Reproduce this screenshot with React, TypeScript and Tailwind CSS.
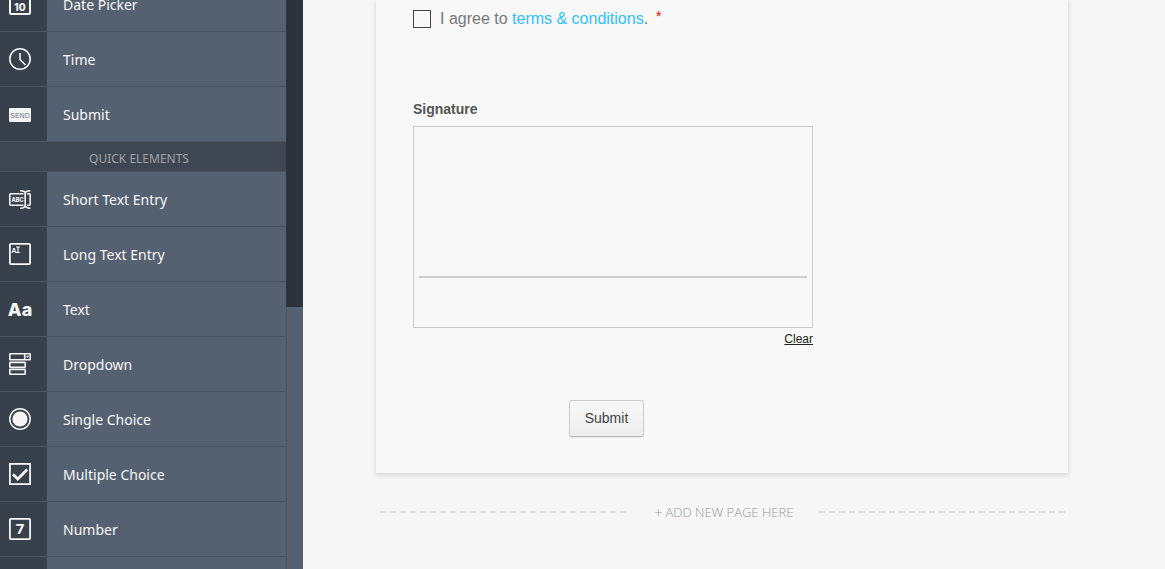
import type { ReactNode } from "react";

function Icon({ children }: { children: ReactNode }) {
    return (
        <svg width="22" height="22" viewBox="0 0 22 22" fill="none" stroke="#f5f5f5" strokeWidth="1.6" aria-hidden="true" className="shrink-0 overflow-visible">
            {children}
        </svg>
    )
}

const basic = [
    {
        label: "Date Picker",
        icon: (
            <Icon>
                <rect x="1" y="1" width="20" height="20" rx="1" strokeWidth="2" />
                <path d="M1 5.5H21" strokeWidth="3" />
                <text x="11" y="17.8" textAnchor="middle" fontFamily="Inter, sans-serif" fontWeight="800" fontSize="10" fill="#f5f5f5" stroke="none">10</text>
            </Icon>
        ),
    },
    {
        label: "Time",
        icon: (
            <Icon>
                <circle cx="11" cy="11" r="10.2" />
                <path d="M11 5V11.5L16.5 17" />
            </Icon>
        ),
    },
    {
        label: "Submit",
        icon: (
            <Icon>
                <rect x="0" y="5" width="22" height="14" rx="1" fill="#f5f5f5" stroke="none" />
                <text x="11" y="14.5" textAnchor="middle" fontFamily="Liberation Sans, sans-serif" fontSize="7" fill="#6b727c" stroke="none">SEND</text>
            </Icon>
        ),
    },
];

const quick = [
    {
        label: "Short Text Entry",
        icon: (
            <Icon>
                <path d="M14.5 5.7H1.8Q.8 5.7 .8 6.7V16.3Q.8 17.3 1.8 17.3H14.5M18 5.7H20.2Q21.2 5.7 21.2 6.7V16.3Q21.2 17.3 20.2 17.3H18" />
                <path d="M11.2 2.8C13.5 2.8 16.2 3.2 16.2 5.4V17.6C16.2 19.8 13.5 20.2 11.2 20.2M21.4 2.8C19 2.8 16.2 3.2 16.2 5.4M16.2 17.6C16.2 19.8 19 20.2 21.4 20.2" />
                <text x="8.6" y="13.6" textAnchor="middle" fontFamily="Inter, sans-serif" fontWeight="800" fontSize="5.6" fill="#f5f5f5" stroke="none">ABC</text>
            </Icon>
        ),
    },
    {
        label: "Long Text Entry",
        icon: (
            <Icon>
                <rect x=".9" y=".9" width="20.2" height="20.2" rx="1" strokeWidth="1.8" />
                <text x="2.5" y="9.5" fontFamily="Open Sans, sans-serif" fontWeight="700" fontSize="7" fill="#f5f5f5" stroke="none">A</text>
                <path d="M7 4H11M9 4V9.5M7 9.5H11" strokeWidth="1.2" />
            </Icon>
        ),
    },
    {
        label: "Text",
        icon: (
            <Icon>
                <text x="11" y="18" textAnchor="middle" fontFamily="Inter, sans-serif" fontWeight="800" fontSize="18" fill="#f5f5f5" stroke="none">Aa</text>
            </Icon>
        ),
    },
    {
        label: "Dropdown",
        icon: (
            <Icon>
                <rect x=".8" y=".8" width="20.4" height="6" rx=".5" />
                <path d="M15.7 1V7" />
                <path d="M17.3 3.2H19.7L18.5 4.6Z" strokeWidth=".7" fill="#f5f5f5" />
                <rect x=".8" y="9.4" width="15.4" height="4.8" rx=".5" />
                <rect x=".8" y="16.4" width="15.4" height="4.8" rx=".5" />
            </Icon>
        ),
    },
    {
        label: "Single Choice",
        icon: (
            <Icon>
                <circle cx="11" cy="11" r="10.2" strokeWidth="1.5" />
                <circle cx="11" cy="11" r="7.6" fill="#f5f5f5" stroke="none" />
            </Icon>
        ),
    },
    {
        label: "Multiple Choice",
        icon: (
            <Icon>
                <rect x=".9" y=".9" width="20.2" height="20.2" strokeWidth="1.8" />
                <path d="M3.9 11.3L8.8 16L18.2 6.4" strokeWidth="2.8" />
            </Icon>
        ),
    },
    {
        label: "Number",
        icon: (
            <Icon>
                <rect x=".9" y=".9" width="20.2" height="20.2" rx=".8" strokeWidth="1.8" />
                <text x="11" y="16.4" textAnchor="middle" fontFamily="Open Sans, sans-serif" fontWeight="700" fontSize="15" fill="#f5f5f5" stroke="none">7</text>
            </Icon>
        ),
    },
    { label: "Image", icon: <Icon><rect x=".9" y=".9" width="20.2" height="20.2" /></Icon> },
];

function ElementList({ items }: { items: { label: string; icon: ReactNode }[] }) {
    return (
        <ul>
            {items.map((item) => (
                <li key={item.label} className="border-b border-[#495461]">
                    <button type="button" className="flex w-full h-[54px] text-left text-[14px] text-[#f8f8f8]">
                        <span className="flex items-center w-[47px] h-full pl-[9px] bg-[#38404b]">{item.icon}</span>
                        <span className="flex items-center flex-1 h-full pl-4 bg-[#556070]">{item.label}</span>
                    </button>
                </li>
            ))}
        </ul>
    )
}

export default function App() {
    return (
        <div className="flex h-screen overflow-hidden bg-[#f6f6f6] font-['Liberation_Sans',Arial,sans-serif]">
            <aside className="flex w-[303px] shrink-0 overflow-hidden bg-[#556070] font-['Noto_Sans','Segoe_UI',sans-serif]">
                <div className="flex-1 -mt-[23px]">
                    <ElementList items={basic} />
                    <h2 className="h-[30px] border-b border-[#495461] bg-[#3e4651] pr-2 text-center text-[12px] leading-[34px] text-[#a0a4aa]">QUICK ELEMENTS</h2>
                    <ElementList items={quick} />
                </div>
                <div className="w-[17px] border-l border-[#495461]">
                    <div className="-ml-px h-[307px] bg-[#2e323a]"></div>
                </div>
            </aside>

            <main className="flex-1 pr-6">
                <div className="max-w-[692px] mx-auto">
                    <form className="bg-[#f8f8f8] px-[37px] pt-2 pb-9 shadow-[0_2px_4px_1px_rgba(0,0,0,0.1)]">
                        <div className="flex items-center gap-[9px] text-[16px] leading-[22px] text-[#777]">
                            <input id="agree" type="checkbox" className="appearance-none size-[18px] border border-[#444] checked:bg-[#444]" />
                            <label htmlFor="agree">
                                I agree to <a href="#terms" className="text-[#2fc1f9]">terms &amp; conditions</a>.
                                <span className="ml-2 align-top text-[14px] leading-4 text-[#f00]">*</span>
                            </label>
                        </div>

                        <div className="mt-[70px] w-[400px] max-w-full">
                            <h3 className="text-[14px] leading-[18px] font-bold text-[#555]">Signature</h3>
                            <div className="mt-2 h-[202px] border border-[#ccc] px-[5px] pt-[149px]">
                                <div className="h-[2px] bg-[#ccc]"></div>
                            </div>
                            <div className="flex justify-end">
                                <button type="button" className="text-[12px] leading-[22px] text-[#222] underline">Clear</button>
                            </div>
                        </div>

                        <button type="button" className="mt-[50px] ml-[156px] block h-[37px] w-[75px] rounded-[3px] border border-[#ccc] border-b-[#bbb] bg-linear-to-b from-[#f8f8f8] to-[#ededed] text-[14px] text-[#444] shadow-[0_1px_1px_rgba(0,0,0,0.08)]">
                            Submit
                        </button>
                    </form>

                    <button type="button" className="mt-7 flex w-full items-center gap-[26px] pl-1 font-['Open_Sans','Segoe_UI',sans-serif] text-[13px] leading-[22px] font-light text-[#999]">
                        <span className="h-[2px] flex-1 bg-[repeating-linear-gradient(90deg,#e0e0e0_0_6px,transparent_6px_10px)]"></span>
                        + ADD NEW PAGE HERE
                        <span className="h-[2px] flex-1 bg-[repeating-linear-gradient(90deg,#e0e0e0_0_6px,transparent_6px_10px)]"></span>
                    </button>
                </div>
            </main>
        </div>
    )
}
